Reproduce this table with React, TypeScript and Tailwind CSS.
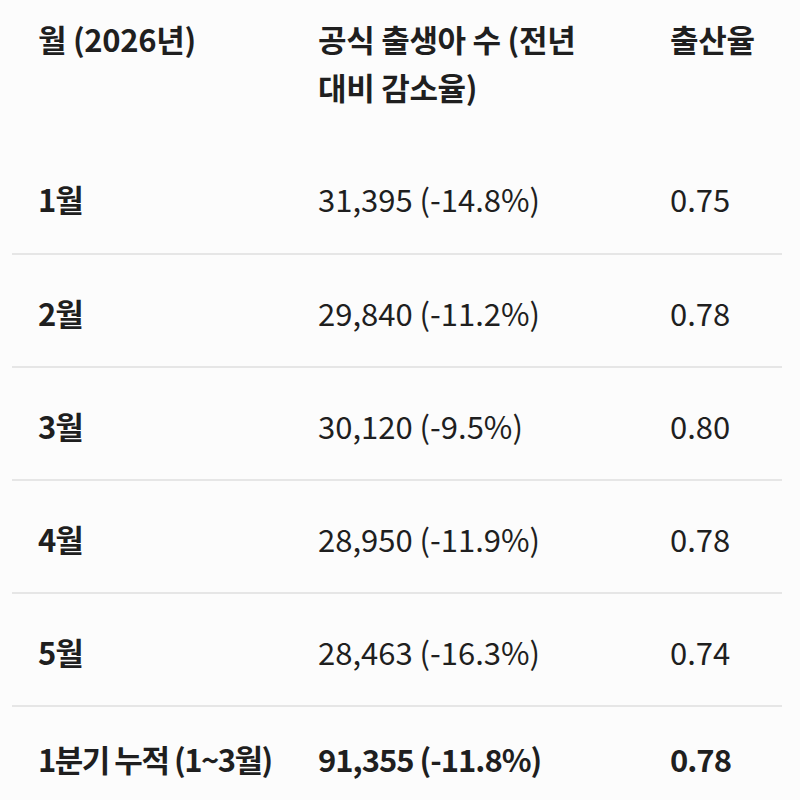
const rows = [
  { month: "1월", births: "31,395 (-14.8%)", rate: "0.75" },
  { month: "2월", births: "29,840 (-11.2%)", rate: "0.78" },
  { month: "3월", births: "30,120 (-9.5%)", rate: "0.80" },
  { month: "4월", births: "28,950 (-11.9%)", rate: "0.78" },
  { month: "5월", births: "28,463 (-16.3%)", rate: "0.74" },
];

const font = "[font-family:'Noto_Sans_CJK_KR','Noto_Sans',sans-serif]";

export default function App() {
  return (
    <div className={`w-[800px] h-[800px] bg-[#fcfcfc] text-[#1f1f1f] ${font} overflow-hidden break-keep`}>
      <div className="mx-[12px] w-[770px]">
        {/* header */}
        <div className="grid grid-cols-[306px_352px_1fr] h-[140px] pt-[15px] font-bold text-[31px] leading-[48px] tracking-[-0.3px]">
          <div className="pl-[26px]">월 (2026년)</div>
          <div className="pr-[50px]">공식 출생아 수 (전년 대비 감소율)</div>
          <div>출산율</div>
        </div>
        {rows.map((r, i) => (
          <div
            key={r.month}
            className={`grid grid-cols-[306px_352px_1fr] h-[113px] items-center pt-[5px] text-[31px] ${
              i === 0 ? "" : "border-t-2 border-[#e6e6e6]"
            }`}
          >
            <div className="pl-[26px] font-bold tracking-[-1px]">{r.month}</div>
            <div>{r.births}</div>
            <div>{r.rate}</div>
          </div>
        ))}
        <div className="grid grid-cols-[306px_352px_1fr] h-[113px] items-center pb-[6px] text-[31px] font-bold border-t-2 border-[#e6e6e6]">
          <div className="pl-[26px] tracking-[-1.5px]">1분기 누적 (1~3월)</div>
          <div className="tracking-[-1px]">91,355 (-11.8%)</div>
          <div className="tracking-[-1px]">0.78</div>
        </div>
      </div>
    </div>
  );
}
